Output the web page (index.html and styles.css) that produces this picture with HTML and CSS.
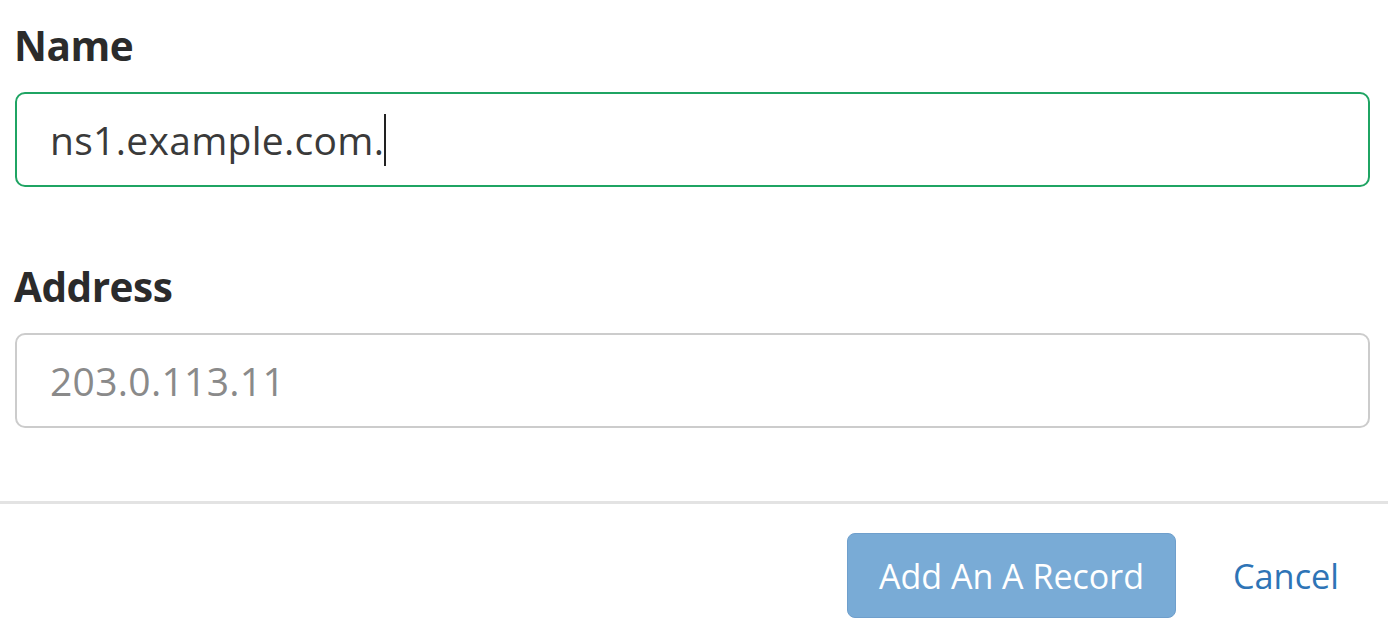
FILE: index.html
```html
<!DOCTYPE html>
<html lang="en">
<head>
<meta charset="utf-8">
<title>Add An A Record</title>
<link rel="stylesheet" href="styles.css">
</head>
<body>
<form class="record-form">
  <div class="fields">
    <div class="field">
      <label class="field-label" for="name">Name</label>
      <div class="input input-focused"><span class="value">ns1.example.com.</span><span class="caret"></span></div>
    </div>
    <div class="field">
      <label class="field-label" for="address">Address</label>
      <div class="input"><span class="placeholder">203.0.113.11</span></div>
    </div>
  </div>
  <div class="footer">
    <button type="button" class="btn-primary">Add An A Record</button>
    <a class="cancel">Cancel</a>
  </div>
</form>
</body>
</html>
```
FILE: styles.css
```css
html, body {
  margin: 0;
  padding: 0;
  background: #ffffff;
}
body {
  font-family: "Open Sans", "Noto Sans", sans-serif;
  color: #333333;
}
.record-form {
  display: flex;
  flex-direction: column;
}
.fields {
  padding: 18px 18px 0 15px;
  display: flex;
  flex-direction: column;
  gap: 72px;
}
.field {
  display: flex;
  flex-direction: column;
}
.field-label {
  font-size: 40.5px;
  font-weight: 700;
  letter-spacing: -0.5px;
  line-height: 56px;
  color: #2b2b2b;
  margin-bottom: 18px;
  margin-left: -1px;
}
.input {
  box-sizing: border-box;
  height: 95px;
  border: 2.5px solid #cccccc;
  border-radius: 10px;
  padding: 0 33px;
  display: flex;
  align-items: center;
  font-size: 39px;
  letter-spacing: 0.3px;
}
.input-focused {
  border-color: #1fa463;
}
.value {
  color: #3a3a3a;
}
.caret {
  display: inline-block;
  width: 2px;
  height: 52px;
  background: #222;
  margin-left: 0;
}
.placeholder {
  color: #8a8a8a;
}
.footer {
  margin-top: 73px;
  border-top: 3px solid #e3e3e3;
  padding: 29px 49px 24px 0;
  display: flex;
  justify-content: flex-end;
  align-items: center;
  gap: 57px;
}
.btn-primary {
  box-sizing: border-box;
  width: 329px;
  height: 85px;
  background: #79abd6;
  border: 1.5px solid #6f9fcc;
  border-radius: 8px;
  color: #ffffff;
  font-family: "Open Sans", "Noto Sans", sans-serif;
  font-size: 34px;
  padding: 0;
}
.cancel {
  font-size: 34.3px;
  color: #2e74b6;
}
```
